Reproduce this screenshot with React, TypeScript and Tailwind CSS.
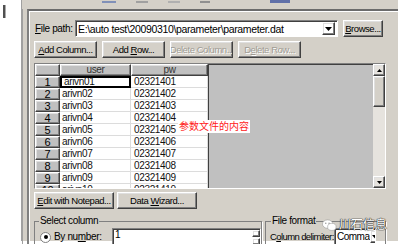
const raised =
  "border border-t-white border-l-white border-r-[#404040] border-b-[#404040] shadow-[inset_-1px_-1px_#808080,inset_1px_1px_#dfdfdf]";
const sunken =
  "border border-t-[#808080] border-l-[#808080] border-r-white border-b-white shadow-[inset_1px_1px_#404040]";

function Btn({ children, w, disabled }: { children: React.ReactNode; w: string; disabled?: boolean }) {
  return (
    <div
      className={`${raised} ${w} h-[17px] bg-[#d4d0c8] flex items-center justify-center overflow-hidden text-[9.5px] tracking-[-0.45px] ${
        disabled ? "text-[#a09c94] [text-shadow:1px_1px_#fff]" : "text-black"
      }`}
    >
      {children}
    </div>
  );
}

const rows = [1, 2, 3, 4, 5, 6, 7, 8, 9, 10];

function Grid() {
  return (
    <div className={`${sunken} h-[126px] mt-[5px] flex bg-[#c0c0c0] overflow-hidden`}>
      <div className="flex flex-col">
        <div className="flex h-[12px] shrink-0">
          <div className={`${raised} w-[25px] h-[12px]`} />
          <div className={`${raised} w-[71px] h-[12px] flex items-center justify-center text-[10px] text-[#333]`}>user</div>
          <div className={`${raised} w-[77px] h-[12px] flex items-center justify-center text-[10px] text-[#333]`}>pw</div>
        </div>
        {rows.map((r) => (
          <div key={r} className="flex h-[12px] shrink-0 leading-[10px]">
            <div className={`${raised} w-[25px] h-[12px] flex items-center justify-center text-[11px]`}>{r}</div>
            <div
              className={`w-[71px] h-[12px] bg-white flex items-center pl-[2px] text-[10px] text-[#111] ${
                r === 1 ? "border-2 border-black pl-[1px]" : "border-r border-b border-[#dcdcdc]"
              }`}
            >
              arivn{String(r).padStart(2, "0")}
            </div>
            <div className="w-[77px] h-[12px] bg-white flex items-center pl-[3px] text-[10px] text-[#111] border-r border-b border-[#dcdcdc]">
              023214{String(r).padStart(2, "0")}
            </div>
          </div>
        ))}
      </div>
      <div className="flex-1 border-l border-[#404040]" />
      <div className="w-[12px] flex flex-col bg-[#e6e3de]">
        <div className={`${raised} h-[12px] flex items-center justify-center`}>
          <svg width="5" height="3" viewBox="0 0 5 3"><path d="M2.5 0L5 3H0z" fill="#000" /></svg>
        </div>
        <div className={`${raised} h-[31px] bg-[#d4d0c8]`} />
        <div className="flex-1" />
        <div className={`${raised} h-[12px] flex items-center justify-center`}>
          <svg width="5" height="3" viewBox="0 0 5 3"><path d="M0 0H5L2.5 3z" fill="#000" /></svg>
        </div>
      </div>
    </div>
  );
}

export default function App() {
  return (
    <div
      className="relative w-[398px] h-[244px] bg-white overflow-hidden flex text-[10px] leading-[12px] tracking-[-0.35px] text-black whitespace-nowrap"
      style={{ fontFamily: '"Liberation Sans", "Noto Sans CJK SC", sans-serif' }}
    >
      <div className="w-[22px] h-[241px] bg-white border-r border-[#a0a0a0] pt-[5px] pl-[3px]">
        <div className="w-[3px] h-[13px] bg-[#505050] border-r border-[#aaa]" />
      </div>
      <div className="flex-1 h-[241px] bg-[#d4d0c8] flex flex-col">
        <div className="h-[9px] flex gap-[20px] pl-[80px] items-start shrink-0">
          <div className="w-[14px] h-[2px] bg-[#8090b8] mt-[1px]" />
          <div className="w-[12px] h-[2px] bg-[#a0a0a0] mt-[1px]" />
          <div className="w-[12px] h-[2px] bg-[#b0b0b0] mt-[1px]" />
          <div className="w-[10px] h-[2px] bg-[#909090] mt-[1px]" />
          <div className="w-[20px] h-[3px] bg-[#6070a8] ml-[40px]" />
        </div>
        <div className="flex flex-1">
          <div className="w-[5px] border-l border-[#a0a0a0]" />
          <div className="flex-1 border-t-2 border-l-2 border-t-[#6b6b6b] border-l-[#808080] shadow-[inset_1px_1px_#fff] pl-[5px] pr-[12px] pt-[9px] flex flex-col">
            <div className="flex items-center h-[17px] shrink-0">
              <span className="w-[41px] pl-[1px]">
                <u>F</u>ile path:
              </span>
              <div className={`${sunken} w-[263px] h-[17px] bg-white flex items-center pl-[2px] pr-[2px]`}>
                <span className="flex-1 text-[10.5px]">E:\auto test\20090310\parameter\parameter.dat</span>
                <div className={`${raised} w-[13px] h-[13px] flex items-center justify-center`}>
                  <svg width="7" height="4" viewBox="0 0 7 4"><path d="M0 0H7L3.5 4z" fill="#000" /></svg>
                </div>
              </div>
              <div className="ml-[5px]">
                <Btn w="w-[40px]">
                  <span>
                    <u>B</u>rowse...
                  </span>
                </Btn>
              </div>
            </div>
            <div className="flex gap-[5px] mt-[4px] shrink-0">
              <Btn w="w-[63px]">
                <span>
                  <u>A</u>dd Column...
                </span>
              </Btn>
              <Btn w="w-[63px]">
                <span>
                  Add <u>R</u>ow...
                </span>
              </Btn>
              <Btn w="w-[63px]" disabled>
                Delete Column...
              </Btn>
              <Btn w="w-[63px]" disabled>
                D<u>e</u>lete Row...
              </Btn>
            </div>
            <Grid />
            <div className="flex gap-[3px] mt-[3px] shrink-0">
              <Btn w="w-[80px]">
                <span>
                  <u>E</u>dit with Notepad...
                </span>
              </Btn>
              <Btn w="w-[80px]">
                <span>
                  Data <u>W</u>izard...
                </span>
              </Btn>
            </div>
            <div className="flex gap-[3px] mt-[7px] shrink-0">
              <div className="relative w-[228px] h-[40px] border border-[#808080] shadow-[1px_1px_#fff] mt-[5px] pt-[6px] pl-[5px]">
                <span className="absolute -top-[7px] left-[4px] bg-[#d4d0c8] px-[1px]">Select column</span>
                <div className="flex items-center">
                  <div className="w-[11px] h-[11px] rounded-full bg-white border border-[#808080] flex items-center justify-center">
                    <div className="w-[4px] h-[4px] rounded-full bg-black" />
                  </div>
                  <span className="ml-[3px] w-[58px]">
                    By nu<u>m</u>ber:
                  </span>
                  <div className={`${sunken} flex-1 h-[18px] bg-white pl-[2px] flex items-start`}>
                    <span className="flex-1">1</span>
                    <div className="flex flex-col gap-[1px] mt-[1px]">
                      <div className={`${raised} w-[8px] h-[7px]`} />
                      <div className={`${raised} w-[8px] h-[7px]`} />
                    </div>
                  </div>
                </div>
              </div>
              <div className="relative flex-1 h-[40px] border border-[#808080] shadow-[1px_1px_#fff] mt-[5px] pt-[6px] pl-[4px]">
                <span className="absolute -top-[7px] left-[5px] bg-[#d4d0c8] px-[1px]">File format</span>
                <div className="flex items-center">
                  <span className="w-[64px] text-[9.5px] tracking-[-0.6px]">
                    C<u>o</u>lumn delimiter:
                  </span>
                  <div className={`${sunken} w-[42px] h-[17px] bg-white pl-[2px] flex items-center overflow-hidden`}>
                    <span className="flex-1 tracking-[-0.5px]">Comma</span>
                    <div className={`${raised} w-[11px] h-[13px] flex items-center justify-center shrink-0`}>
                      <svg width="7" height="4" viewBox="0 0 7 4"><path d="M0 0H7L3.5 4z" fill="#000" /></svg>
                    </div>
                  </div>
                </div>
              </div>
            </div>
          </div>
        </div>
      </div>

      <div className="absolute left-[178px] top-[120px] bg-white px-[1px] text-[10px] leading-[13px] tracking-normal text-[#ff2020]">
        参数文件的内容
      </div>

      <div className="absolute left-[322px] top-[218px] flex items-center gap-[2px]">
        <svg width="15" height="13" viewBox="0 0 16 13">
          <ellipse cx="6" cy="5" rx="5.5" ry="4.5" fill="#fff" stroke="#999" strokeWidth="0.6" />
          <ellipse cx="10.5" cy="8" rx="4.5" ry="3.8" fill="#fff" stroke="#999" strokeWidth="0.6" />
          <circle cx="4" cy="4" r="0.8" fill="#999" />
          <circle cx="7.5" cy="4" r="0.8" fill="#999" />
        </svg>
        <span className="text-white text-[12px] leading-[14px] tracking-normal [text-shadow:0_0_1px_#222,0_0_1px_#222,0_0_1px_#222]">川石信息</span>
      </div>
    </div>
  );
}
